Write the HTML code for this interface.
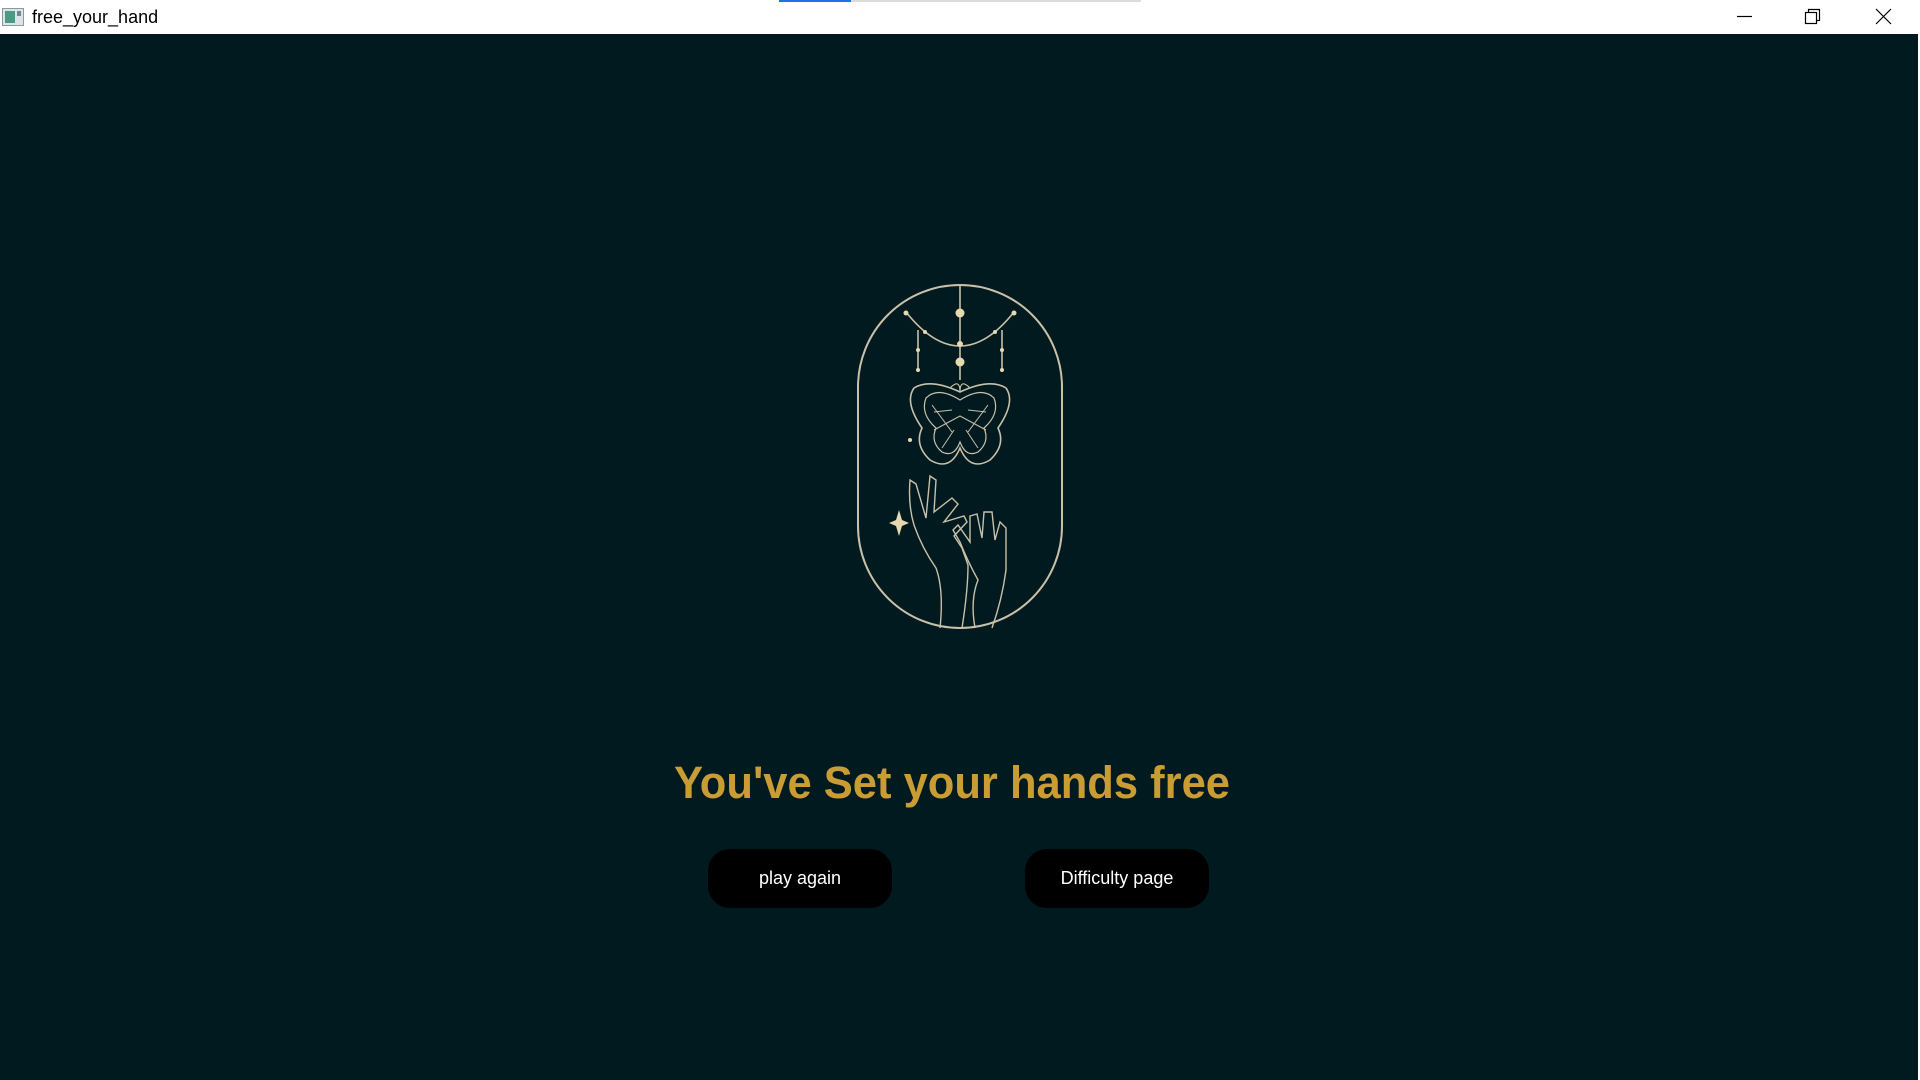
<!DOCTYPE html>
<html><head><meta charset="utf-8"><style>
html,body{margin:0;padding:0;width:1920px;height:1080px;overflow:hidden;background:#011a20;font-family:"Liberation Sans",sans-serif}
.tb{position:absolute;left:0;top:0;width:1920px;height:34px;background:#fff}
.title{position:absolute;left:32px;top:7px;font-size:18px;color:#000}
.btn{position:absolute;top:849px;height:59px;width:184px;background:#000;border-radius:22px;color:#fff;font-size:18px;line-height:59px;text-align:center}
</style></head><body>
<div class="tb">
<svg style="position:absolute;left:2px;top:8px" width="22" height="18"><rect x="0.5" y="0.5" width="21" height="17" fill="#dde3e6" stroke="#8a9aa0"/><rect x="3" y="3" width="10" height="12" fill="#4a9a86"/><rect x="15" y="3" width="4" height="5" fill="#6a8a96"/></svg>
<div class="title">free_your_hand</div>
<div style="position:absolute;left:779px;top:0;width:72px;height:2px;background:#1a73e8"></div>
<div style="position:absolute;left:851px;top:0;width:290px;height:2px;background:#dcdcdc"></div>
<svg style="position:absolute;left:1730px;top:6px" width="180" height="24" stroke="#000" fill="none" stroke-width="1.2">
<line x1="7" y1="10.5" x2="22" y2="10.5"/>
<rect x="75.5" y="6.5" width="11" height="11" fill="#fff"/><path d="M78.5 6.5V3.5H89.5V14.5H86.5"/>
<path d="M146 3L161 18M161 3L146 18"/>
</svg>
</div>
<div style="position:absolute;left:1918px;top:34px;width:2px;height:1046px;background:#fff"></div>
<svg style="position:absolute;left:850px;top:280px" width="220" height="355" fill="none" stroke="#c9c0a8" stroke-width="1.6">
<rect x="8" y="5" width="204" height="343" rx="102" ry="102" stroke-width="2"/>
<line x1="110" y1="5" x2="110" y2="100"/>
<path d="M56 32 Q110 100 164 32"/>
<line x1="68" y1="50" x2="68" y2="90"/><line x1="152" y1="50" x2="152" y2="90"/>
<g fill="#e6d8b0" stroke="none">
<circle cx="110" cy="33" r="4.5"/><circle cx="110" cy="64" r="3"/><circle cx="110" cy="82" r="4.5"/>
<circle cx="56" cy="33" r="2.5"/><circle cx="164" cy="33" r="2.5"/><circle cx="75" cy="52" r="2"/><circle cx="145" cy="52" r="2"/>
<circle cx="68" cy="70" r="2"/><circle cx="152" cy="70" r="2"/><circle cx="68" cy="90" r="2"/><circle cx="152" cy="90" r="2"/>
<circle cx="60" cy="160" r="2"/>
<path d="M49 230 L52 240 L59 243 L52 246 L49 256 L46 246 L39 243 L46 240Z"/>
</g>
<path d="M110 112 Q80 98 64 108 Q54 122 72 148 Q64 165 80 180 Q100 192 110 168 Q120 192 140 180 Q156 165 148 148 Q166 122 156 108 Q140 98 110 112Z"/>
<path d="M110 120 Q88 106 76 118 Q70 134 86 148 Q80 162 92 172 Q104 178 110 162 Q116 178 128 172 Q140 162 134 148 Q150 134 144 118 Q132 106 110 120Z" stroke-width="1.2"/>
<path d="M82 125 L102 152 M138 125 L118 152 M84 150 L110 136 L136 150 M92 168 L104 150 M128 168 L116 150 M84 132 L102 130 M136 132 L118 130" stroke-width="1"/>
<path d="M100 108 Q110 98 110 112 Q110 98 120 108" stroke-width="1.2"/>
<path d="M90 348 Q94 310 86 288 Q72 268 64 245 Q58 225 60 200 L66 204 L76 238 L80 196 L86 200 L84 232 L102 218 L108 224 L94 242 L114 236 L117 242 L104 256 L112 268 L118 285 Q118 310 112 348" stroke-width="1.4"/>
<path d="M125 348 Q120 320 128 300 Q118 282 110 262 L103 250 L108 245 L120 262 L120 236 L127 234 L132 258 L134 232 L142 232 L145 260 L150 242 L156 248 L156 290 Q152 320 142 348" stroke-width="1.4"/>
</svg>
<svg style="position:absolute;left:660px;top:750px" width="600" height="70"><text x="14" y="48" textLength="556" lengthAdjust="spacingAndGlyphs" font-family="Liberation Sans" font-weight="bold" font-size="45" fill="#c99d33">You've Set your hands free</text></svg>
<div class="btn" style="left:708px">play again</div>
<div class="btn" style="left:1025px">Difficulty page</div>
</body></html>
